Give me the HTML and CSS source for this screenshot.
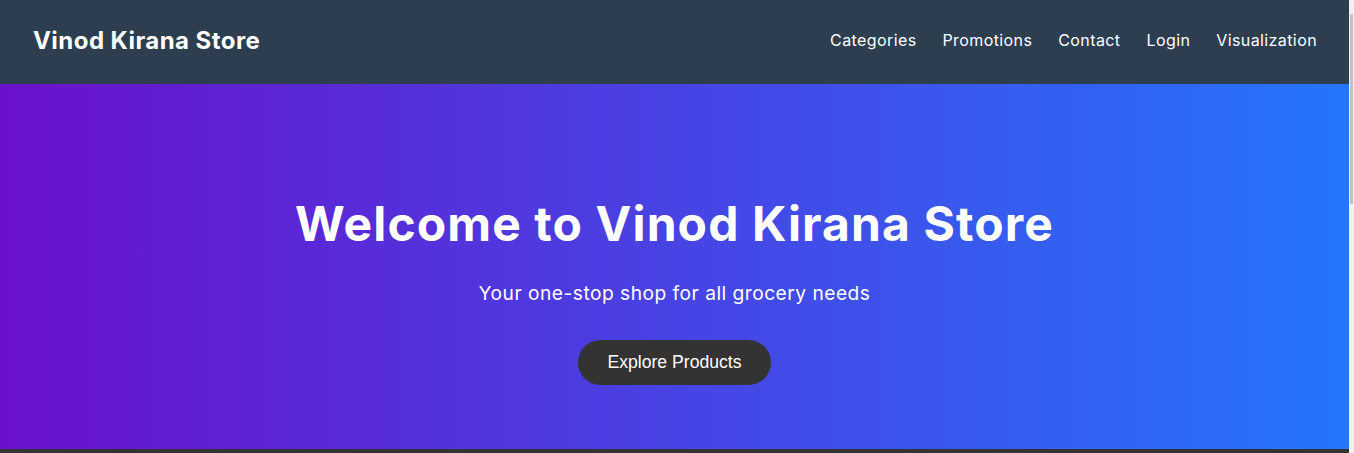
FILE: index.html
```html
<!DOCTYPE html>
<html lang="en">
<head>
<meta charset="utf-8">
<title>Vinod Kirana Store</title>
<link rel="stylesheet" href="styles.css">
</head>
<body>
<header class="navbar">
  <div class="logo">Vinod Kirana Store</div>
  <nav class="nav-links">
    <a href="#">Categories</a>
    <a href="#">Promotions</a>
    <a href="#">Contact</a>
    <a href="#">Login</a>
    <a href="#">Visualization</a>
  </nav>
</header>
<section class="hero">
  <h1 class="hero-title">Welcome to Vinod Kirana Store</h1>
  <p class="hero-sub">Your one-stop shop for all grocery needs</p>
  <button class="hero-btn">Explore Products</button>
</section>
<section class="below"></section>
<div class="scrollbar"><div class="scroll-thumb"></div></div>
</body>
</html>
```
FILE: styles.css
```css
* { box-sizing: border-box; }

body {
  margin: 0 5px 0 0;
  font-family: "Inter", "Noto Sans", sans-serif;
  color: #fff;
}

.navbar {
  height: 84px;
  background: #2c3e50;
  display: flex;
  align-items: center;
  justify-content: space-between;
  padding: 0 32px 4px 33px;
}

.logo {
  font-size: 24px;
  font-weight: 700;
  letter-spacing: 0.45px;
}

.nav-links {
  display: flex;
  gap: 26px;
}

.nav-links a {
  color: #fff;
  text-decoration: none;
  font-size: 16px;
  letter-spacing: 0.4px;
}

.hero {
  height: 365px;
  background: linear-gradient(to right, #6a11cb, #2575fc);
  display: flex;
  flex-direction: column;
  align-items: center;
  padding-top: 111px;
  text-align: center;
}

.hero-title {
  margin: 0;
  font-size: 48px;
  line-height: 1.2;
  font-weight: 700;
  letter-spacing: 1.1px;
}

.hero-sub {
  margin: 29px 0 0;
  font-size: 19.2px;
  line-height: 1.2;
  letter-spacing: 0.48px;
}

.hero-btn {
  margin-top: 35px;
  background: #333;
  color: #fff;
  border: none;
  border-radius: 30px;
  padding: 12px 30px;
  height: 45px;
  font-family: "Liberation Sans", Arial, sans-serif;
  font-size: 17.6px;
}

.below {
  height: 600px;
  background: #333;
}

.scrollbar {
  position: fixed;
  top: 0;
  right: 0;
  width: 5px;
  height: 100%;
  background: #f1f1f1;
}

.scroll-thumb {
  margin: 14px 0 0 1px;
  width: 3px;
  height: 190px;
  background: #c1c1c1;
}
```
